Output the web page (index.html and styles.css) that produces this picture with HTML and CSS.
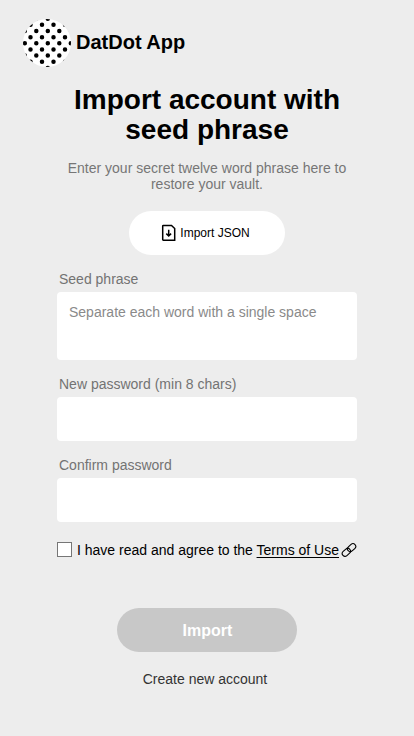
FILE: index.html
```html
<!DOCTYPE html>
<html lang="en">
<head>
<meta charset="utf-8">
<title>DatDot App</title>
<link rel="stylesheet" href="styles.css">
</head>
<body>
<header class="brand">
  <svg class="logo" viewBox="0 0 48 48" aria-hidden="true">
    <clipPath id="disc"><circle cx="24" cy="24" r="24"/></clipPath>
    <circle cx="24" cy="24" r="24" fill="#fff"/>
    <g clip-path="url(#disc)">
      <path class="dots" d="M13.3-.2H48M7.5 5.8H48M1.8 12.1H49M7.5 18.2H48M1.8 24.3H49M7.5 30.6H48M1.8 36.6H49M7.5 42.8H48M13.3 49H48"/>
    </g>
  </svg>
  <span class="name">DatDot App</span>
</header>
<main class="page">
  <h1>Import account with<br>seed phrase</h1>
  <p class="intro">Enter your secret twelve word phrase here to<br>restore your vault.</p>
  <button class="json" type="button">
    <svg class="file" viewBox="0 0 16 18" aria-hidden="true"><path d="M2.3 1.5h8.2l3.2 3v11.7H2.3a.6.6 0 0 1-.6-.6V2.1a.6.6 0 0 1 .6-.6zM7.7 5.8v6M5.3 9.6l2.4 2.4 2.4-2.4"/></svg>
    <span>Import JSON</span>
  </button>
  <form class="form">
    <label for="seed">Seed phrase</label>
    <textarea id="seed" placeholder="Separate each word with a single space"></textarea>
    <label for="password">New password (min 8 chars)</label>
    <input id="password" class="field" type="password">
    <label for="confirm">Confirm password</label>
    <input id="confirm" class="field" type="password">
    <div class="agree">
      <input class="check" type="checkbox" aria-label="Agree">
      <span>I have read and agree to the <a href="#">Terms of Use</a></span>
      <svg class="link" viewBox="0 0 16 16" aria-hidden="true"><g transform="rotate(-42 8 8)"><rect x="-.1" y="5.2" width="9.2" height="5.6" rx="2.8"/><rect x="6.9" y="5.2" width="9.2" height="5.6" rx="2.8"/></g></svg>
    </div>
    <button class="submit" type="button">Import</button>
  </form>
  <a class="create" href="#">Create new account</a>
</main>
</body>
</html>
```
FILE: styles.css
```css
* { box-sizing: border-box; }
body {
  margin: 0;
  height: 736px;
  overflow: hidden;
  background: #ededed;
  color: #000;
  font: 14px/16px "Liberation Sans", Arial, sans-serif;
}
button, input, textarea { font-family: inherit; border: 0; margin: 0; padding: 0; }
.brand { display: flex; align-items: center; gap: 5px; padding: 19px 0 0 23px; }
.logo { width: 48px; height: 48px; }
.dots { fill: none; stroke: #000; stroke-width: 4.5; stroke-linecap: round; stroke-dasharray: 0 11.5; }
.name { font-size: 20px; line-height: 24px; font-weight: bold; padding-bottom: 2px; }
.page { display: flex; flex-direction: column; align-items: center; padding-top: 18px; }
h1 { margin: 0; font-size: 28px; line-height: 30px; text-align: center; }
.intro { margin: 15px 0 19px; color: #767676; text-align: center; }
.json {
  display: flex; align-items: center; justify-content: center; gap: 3px;
  width: 156px; height: 44px; padding-right: 3px; border-radius: 22px;
  background: #fff; color: #000; font-size: 12px;
}
.file { width: 16px; height: 18px; margin-bottom: 1px; fill: none; stroke: #000; stroke-width: 1.5; }
.form { display: flex; flex-direction: column; width: 300px; margin-top: 16px; }
label { padding-left: 2px; color: #737373; margin-bottom: 5px; }
textarea {
  height: 68px; padding: 12px; margin-bottom: 16px; resize: none;
  border-radius: 4px; background: #fff; font-size: 14px; line-height: 16px;
}
textarea::placeholder { color: #8a8a8a; }
.field { height: 44px; border-radius: 4px; background: #fff; margin-bottom: 16px; }
.agree { display: flex; align-items: center; height: 16px; margin-top: 4px; white-space: nowrap; }
.agree a { color: #000; text-underline-offset: 2px; }
.check { appearance: none; width: 15px; height: 15px; border: 1px solid #767676; background: #fff; margin: 0 5px 1px 0; }
.link { width: 16px; height: 16px; margin-left: 2px; fill: none; stroke: #000; stroke-width: 1.1; }
.submit {
  align-self: center; width: 180px; height: 44px; margin-top: 50px; padding: 1px 0 0 1px;
  border-radius: 22px; background: #c8c8c8; color: #fff; font-size: 16px; font-weight: bold;
}
.create { margin-top: 19px; padding-right: 4px; color: #333; text-decoration: none; }
```
